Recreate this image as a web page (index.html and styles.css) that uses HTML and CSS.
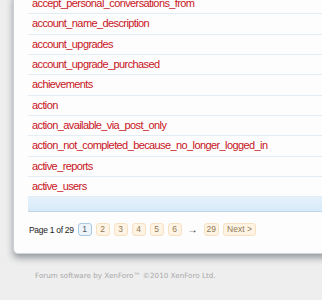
FILE: index.html
```html
<!DOCTYPE html>
<html lang="en">
<head>
<meta charset="utf-8"/>
<title>Phrases</title>
<link rel="stylesheet" href="styles.css">
</head>
<body>
<div class="page">
<div class="panel">
<ol class="phrase-list">
<li><a href="#">accept_personal_conversations_from</a></li>
<li><a href="#">account_name_description</a></li>
<li><a href="#">account_upgrades</a></li>
<li><a href="#">account_upgrade_purchased</a></li>
<li><a href="#">achievements</a></li>
<li><a href="#">action</a></li>
<li><a href="#">action_available_via_post_only</a></li>
<li><a href="#">action_not_completed_because_no_longer_logged_in</a></li>
<li><a href="#">active_reports</a></li>
<li><a href="#">active_users</a></li>
</ol>
<div class="list-footer"></div>
<div class="page-nav">
<span class="page-nav-header">Page 1 of 29</span>
<a class="current" href="#">1</a>
<a href="#">2</a>
<a href="#">3</a>
<a href="#">4</a>
<a href="#">5</a>
<a href="#">6</a>
<span class="skip">&rarr;</span>
<a href="#">29</a>
<a class="text" href="#">Next &gt;</a>
</div>
</div>
<div class="footer">Forum software by XenForo&trade; &copy;2010 XenForo Ltd.</div>
</div>
</body>
</html>
```
FILE: styles.css
```css
body {
    margin: 0;
    background: #eeeeee;
    font-family: 'Liberation Sans', Arial, sans-serif;
    overflow: hidden;
}

.page {
    width: 420px;
    padding-left: 13px;
}

.panel {
    margin-top: -6px;
    background: #fdfdfd;
    border-left: 1px solid #c9cfd4;
    border-bottom: 1px solid #cfd4d8;
    border-radius: 0 0 0 5px;
    box-shadow: 0 4px 7px rgba(40, 50, 60, 0.45);
    padding: 0 0 0 14px;
}

.phrase-list {
    list-style: none;
    margin: 0;
    padding: 0;
}

.phrase-list li {
    height: 19.33px;
    line-height: 19.33px;
    border-bottom: 1px solid #e3edf5;
    padding-left: 4px;
    font-size: 11px;
    letter-spacing: -0.6px;
}

.phrase-list a {
    color: #c8141c;
    text-decoration: none;
}

.list-footer {
    height: 14px;
    background: linear-gradient(#e4f1fb, #d8eaf8);
    border-bottom: 1px solid #bfd6e9;
}

.page-nav {
    display: flex;
    align-items: center;
    gap: 4px;
    padding: 11px 0 17px 1px;
    font-size: 8.5px;
}

.page-nav-header {
    color: #222;
    letter-spacing: -0.3px;
}

.page-nav a {
    display: block;
    min-width: 8px;
    height: 11px;
    line-height: 11px;
    padding: 0 2px;
    text-align: center;
    border: 1px solid #f6e1c2;
    border-radius: 3px;
    background: #fff4e4;
    color: #8f7a58;
    text-decoration: none;
}

.page-nav a.current {
    border-color: #a8c9e4;
    background: #edf5fb;
    color: #4a5b6a;
}

.page-nav a.text {
    padding: 0 3px;
}

.page-nav .skip {
    color: #222;
    font-size: 10px;
    padding: 0 2px;
}

.footer {
    padding: 17px 0 0 22px;
    font-family: 'DejaVu Sans', Verdana, sans-serif;
    font-size: 7.2px;
    color: #a8a8a8;
}
```
